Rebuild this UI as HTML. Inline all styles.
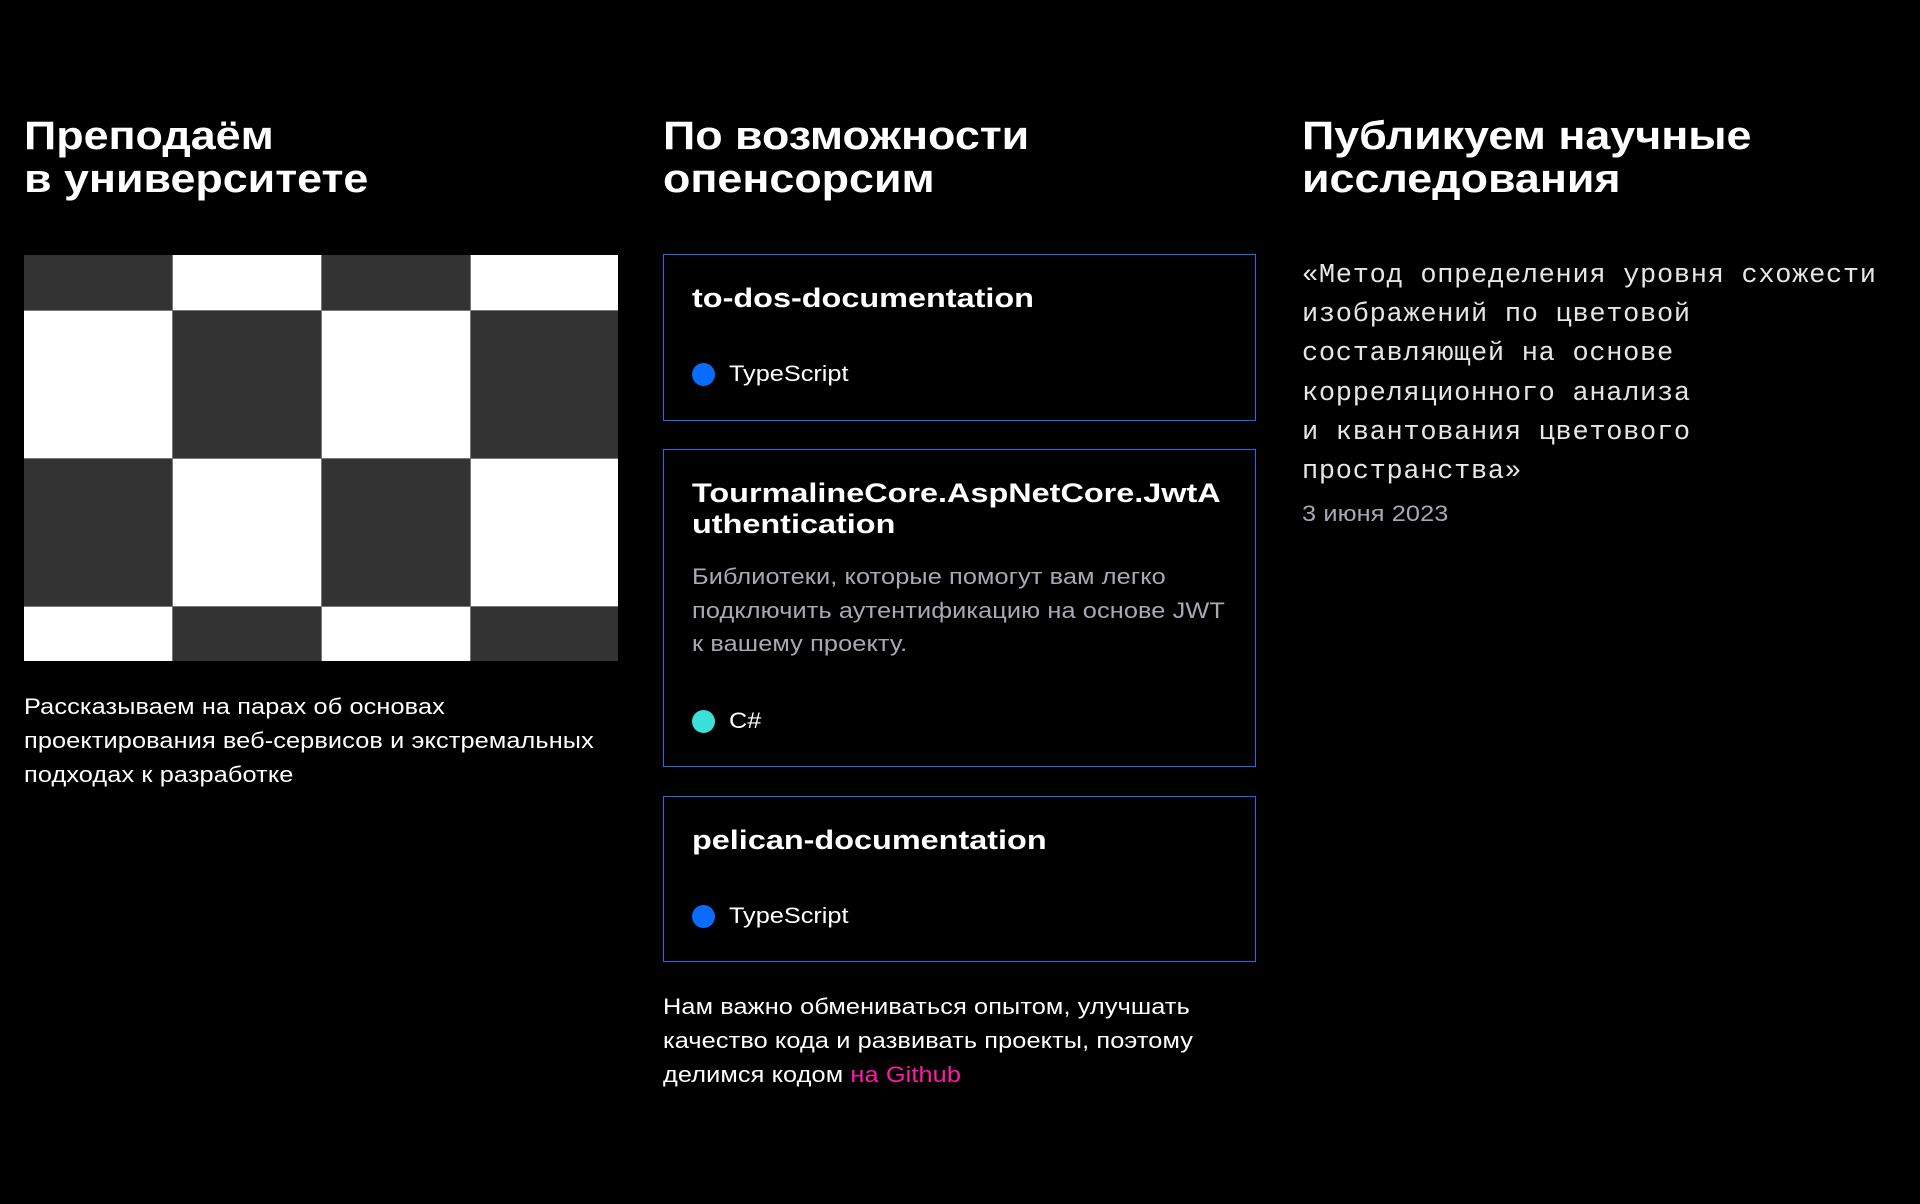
<!DOCTYPE html>
<html><head><meta charset="utf-8"><style>
*{margin:0;padding:0;box-sizing:border-box}
body{width:1920px;height:1204px;background:#000;color:#fff;font-family:"Liberation Sans",sans-serif;position:relative;overflow:hidden}
.h{position:absolute;top:115px;font-size:40px;line-height:43px;font-weight:bold;transform:scaleX(1.12);transform-origin:0 0;white-space:nowrap}
.p{position:absolute;font-size:22px;line-height:34px;transform:scaleX(1.15);transform-origin:0 0;white-space:nowrap;letter-spacing:0.1px}
.grid{position:absolute;left:24px;top:255px;width:594px;height:406px;display:grid;grid-template-columns:148px 148px 148px 147px;grid-template-rows:55px 147px 147px 54px;gap:1px;background:#777}
.d{background:#333}.w{background:#fff}
.card{position:absolute;left:663px;width:593px;border:1.5px solid #1a6cf0}
.t{position:absolute;left:28px;font-size:27px;line-height:31px;font-weight:bold;transform:scaleX(1.2);transform-origin:0 0;white-space:nowrap}
.lang{position:absolute;left:28px;font-size:22px;display:flex;align-items:center}
.lang span{display:inline-block;transform:scaleX(1.15);transform-origin:0 50%}
.dot{width:23px;height:23px;border-radius:50%;margin-right:14px}
.mono{position:absolute;left:1302px;top:257px;font-family:"Liberation Mono",monospace;font-size:27px;line-height:39.2px;color:#e6e6e6;letter-spacing:0.7px}
</style></head><body>
<div class="h" style="left:24px">Преподаём<br>в университете</div>
<div class="h" style="left:663px">По возможности<br>опенсорсим</div>
<div class="h" style="left:1302px">Публикуем научные<br>исследования</div>

<div class="grid">
<div class="d"></div><div class="w"></div><div class="d"></div><div class="w"></div>
<div class="w"></div><div class="d"></div><div class="w"></div><div class="d"></div>
<div class="d"></div><div class="w"></div><div class="d"></div><div class="w"></div>
<div class="w"></div><div class="d"></div><div class="w"></div><div class="d"></div>
</div>
<div class="p" style="left:24px;top:690px">Рассказываем на парах об основах<br>проектирования веб-сервисов и экстремальных<br>подходах к разработке</div>

<div class="card" style="top:254px;height:167px">
<div class="t" style="top:28px">to-dos-documentation</div>
<div class="lang" style="top:106px"><div class="dot" style="background:#0a6cff"></div><span>TypeScript</span></div>
</div>
<div class="card" style="top:449px;height:318px">
<div class="t" style="top:28px">TourmalineCore.AspNetCore.JwtA<br>uthentication</div>
<div class="p" style="left:28px;top:110px;color:#a9a9b2;line-height:33.5px">Библиотеки, которые помогут вам легко<br>подключить аутентификацию на основе JWT<br>к вашему проекту.</div>
<div class="lang" style="top:258px"><div class="dot" style="background:#3be0d8"></div><span>C#</span></div>
</div>
<div class="card" style="top:796px;height:166px">
<div class="t" style="top:28px">pelican-documentation</div>
<div class="lang" style="top:106px"><div class="dot" style="background:#0a6cff"></div><span>TypeScript</span></div>
</div>
<div class="p" style="left:663px;top:990px">Нам важно обмениваться опытом, улучшать<br>качество кода и развивать проекты, поэтому<br>делимся кодом <span style="color:#ff1aa8">на Github</span></div>

<div class="mono">«Метод определения уровня схожести<br>изображений по цветовой<br>составляющей на основе<br>корреляционного анализа<br>и квантования цветового<br>пространства»</div>
<div class="p" style="left:1302px;top:497px;color:#a9a9b2">3 июня 2023</div>
</body></html>
